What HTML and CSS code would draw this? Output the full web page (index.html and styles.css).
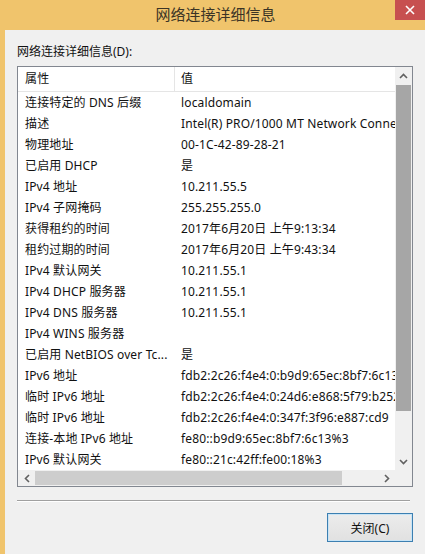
FILE: index.html
```html
<!DOCTYPE html>
<html lang="zh-CN">
<head>
<meta charset="utf-8">
<title>网络连接详细信息</title>
<link rel="stylesheet" href="styles.css">
</head>
<body>
<div class="window">
  <div class="titlebar">
    <span class="title">网络连接详细信息</span>
    <div class="close">
      <svg width="10" height="10" viewBox="0 0 10 10"><path d="M1 1L9 9M9 1L1 9" stroke="#fff" stroke-width="1.6" fill="none"/></svg>
    </div>
  </div>
  <div class="body">
    <div class="label">网络连接详细信息(D):</div>
    <div class="listbox">
      <div class="list-main">
        <div class="list-area">
          <div class="row header"><div class="c1">属性</div><div class="c2">值</div></div>
          <div class="row"><div class="c1">连接特定的 DNS 后缀</div><div class="c2">localdomain</div></div>
          <div class="row"><div class="c1">描述</div><div class="c2">Intel(R) PRO/1000 MT Network Connection</div></div>
          <div class="row"><div class="c1">物理地址</div><div class="c2">00-1C-42-89-28-21</div></div>
          <div class="row"><div class="c1">已启用 DHCP</div><div class="c2">是</div></div>
          <div class="row"><div class="c1">IPv4 地址</div><div class="c2">10.211.55.5</div></div>
          <div class="row"><div class="c1">IPv4 子网掩码</div><div class="c2">255.255.255.0</div></div>
          <div class="row"><div class="c1">获得租约的时间</div><div class="c2">2017年6月20日 上午9:13:34</div></div>
          <div class="row"><div class="c1">租约过期的时间</div><div class="c2">2017年6月20日 上午9:43:34</div></div>
          <div class="row"><div class="c1">IPv4 默认网关</div><div class="c2">10.211.55.1</div></div>
          <div class="row"><div class="c1">IPv4 DHCP 服务器</div><div class="c2">10.211.55.1</div></div>
          <div class="row"><div class="c1">IPv4 DNS 服务器</div><div class="c2">10.211.55.1</div></div>
          <div class="row"><div class="c1">IPv4 WINS 服务器</div><div class="c2"></div></div>
          <div class="row"><div class="c1">已启用 NetBIOS over Tc...</div><div class="c2">是</div></div>
          <div class="row"><div class="c1">IPv6 地址</div><div class="c2">fdb2:2c26:f4e4:0:b9d9:65ec:8bf7:6c13</div></div>
          <div class="row"><div class="c1">临时 IPv6 地址</div><div class="c2">fdb2:2c26:f4e4:0:24d6:e868:5f79:b252</div></div>
          <div class="row"><div class="c1">临时 IPv6 地址</div><div class="c2">fdb2:2c26:f4e4:0:347f:3f96:e887:cd9</div></div>
          <div class="row"><div class="c1">连接-本地 IPv6 地址</div><div class="c2">fe80::b9d9:65ec:8bf7:6c13%3</div></div>
          <div class="row"><div class="c1">IPv6 默认网关</div><div class="c2">fe80::21c:42ff:fe00:18%3</div></div>
        </div>
        <div class="vscroll">
          <div class="sbtn">
            <svg width="9" height="6" viewBox="0 0 9 6"><path d="M1 5L4.5 1.5L8 5" stroke="#606060" stroke-width="1.6" fill="none"/></svg>
          </div>
          <div class="vthumb"></div>
          <div class="track"></div>
          <div class="sbtn">
            <svg width="9" height="6" viewBox="0 0 9 6"><path d="M1 1L4.5 4.5L8 1" stroke="#606060" stroke-width="1.6" fill="none"/></svg>
          </div>
        </div>
      </div>
      <div class="hrow">
        <div class="hscroll">
          <div class="hbtn">
            <svg width="6" height="9" viewBox="0 0 6 9"><path d="M5 1L1.5 4.5L5 8" stroke="#606060" stroke-width="1.6" fill="none"/></svg>
          </div>
          <div class="hthumb"></div>
          <div class="track"></div>
          <div class="hbtn">
            <svg width="6" height="9" viewBox="0 0 6 9"><path d="M1 1L4.5 4.5L1 8" stroke="#606060" stroke-width="1.6" fill="none"/></svg>
          </div>
        </div>
        <div class="corner"></div>
      </div>
    </div>
    <div class="sep"></div>
    <div class="footer">
      <button class="btn">关闭(C)</button>
    </div>
  </div>
</div>
</body>
</html>
```
FILE: styles.css
```css
html, body {
  margin: 0;
  padding: 0;
}
body {
  width: 425px;
  height: 554px;
  overflow: hidden;
  font-family: "Noto Sans", "Noto Sans CJK SC", sans-serif;
  font-size: 12px;
  color: #111;
  background: #f0f0f0;
}
.window {
  width: 425px;
  height: 554px;
  display: flex;
  flex-direction: column;
}
.titlebar {
  height: 30px;
  background: #f0c46c;
  display: flex;
  justify-content: center;
  align-items: flex-start;
  position: relative;
}
.title {
  font-family: "Noto Sans CJK SC", sans-serif;
  font-size: 15px;
  line-height: 28px;
  color: #3b3426;
  padding-left: 6px;
}
.close {
  position: absolute;
  right: 0;
  top: 0;
  width: 30px;
  height: 20px;
  background: #c75050;
  display: flex;
  align-items: center;
  justify-content: center;
}
.body {
  flex: 1;
  border-left: 5px solid #f0c46c;
  background: #f0f0f0;
  padding: 14px 0 0 12px;
}
.label {
  line-height: 16px;
  height: 16px;
  margin-bottom: 6px;
}
.listbox {
  width: 396px;
  box-sizing: border-box;
  border: 1px solid #828790;
  background: #fff;
  display: flex;
  flex-direction: column;
}
.list-main {
  display: flex;
  height: 403px;
}
.list-area {
  width: 377px;
  overflow: hidden;
}
.row {
  display: flex;
  height: 21px;
  line-height: 21px;
  white-space: nowrap;
  letter-spacing: 0.14px;
}
.row.header {
  height: 25px;
  line-height: 24px;
  border-bottom: 1px solid #e5e5e5;
  box-sizing: border-box;
}
.c1 {
  width: 157px;
  flex: none;
  padding-left: 7px;
  box-sizing: border-box;
  overflow: hidden;
}
.header .c1 {
  border-right: 1px solid #e5e5e5;
}
.c2 {
  padding-left: 6px;
  white-space: nowrap;
}
.vscroll {
  width: 17px;
  background: #f0f0f0;
  display: flex;
  flex-direction: column;
}
.sbtn {
  height: 17px;
  flex: none;
  display: flex;
  align-items: center;
  justify-content: center;
}
.vthumb {
  margin: 1px 1px 0 1px;
  height: 326px;
  background: #a6a6a6;
}
.track {
  flex: 1;
}
.hrow {
  display: flex;
  height: 16px;
}
.hscroll {
  width: 377px;
  display: flex;
  background: #f0f0f0;
}
.hbtn {
  width: 17px;
  flex: none;
  display: flex;
  align-items: center;
  justify-content: center;
}
.hthumb {
  width: 307px;
  margin: 1px 0;
  background: #cdcdcd;
}
.corner {
  width: 17px;
  background: #f0f0f0;
}
.sep {
  width: 393px;
  height: 0;
  margin-top: 13px;
  border-top: 1px solid #a0a0a0;
  border-bottom: 1px solid #ffffff;
}
.footer {
  width: 396px;
  display: flex;
  justify-content: flex-end;
  margin-top: 11px;
}
.btn {
  width: 86px;
  height: 29px;
  box-sizing: border-box;
  border: 1px solid #3c7fb1;
  background: linear-gradient(#ececec, #e1e1e1);
  font-family: "Noto Sans", "Noto Sans CJK SC", sans-serif;
  font-size: 12px;
  color: #111;
  padding: 0;
  box-shadow: inset 0 0 0 1px #c8e4f6;
}
```
